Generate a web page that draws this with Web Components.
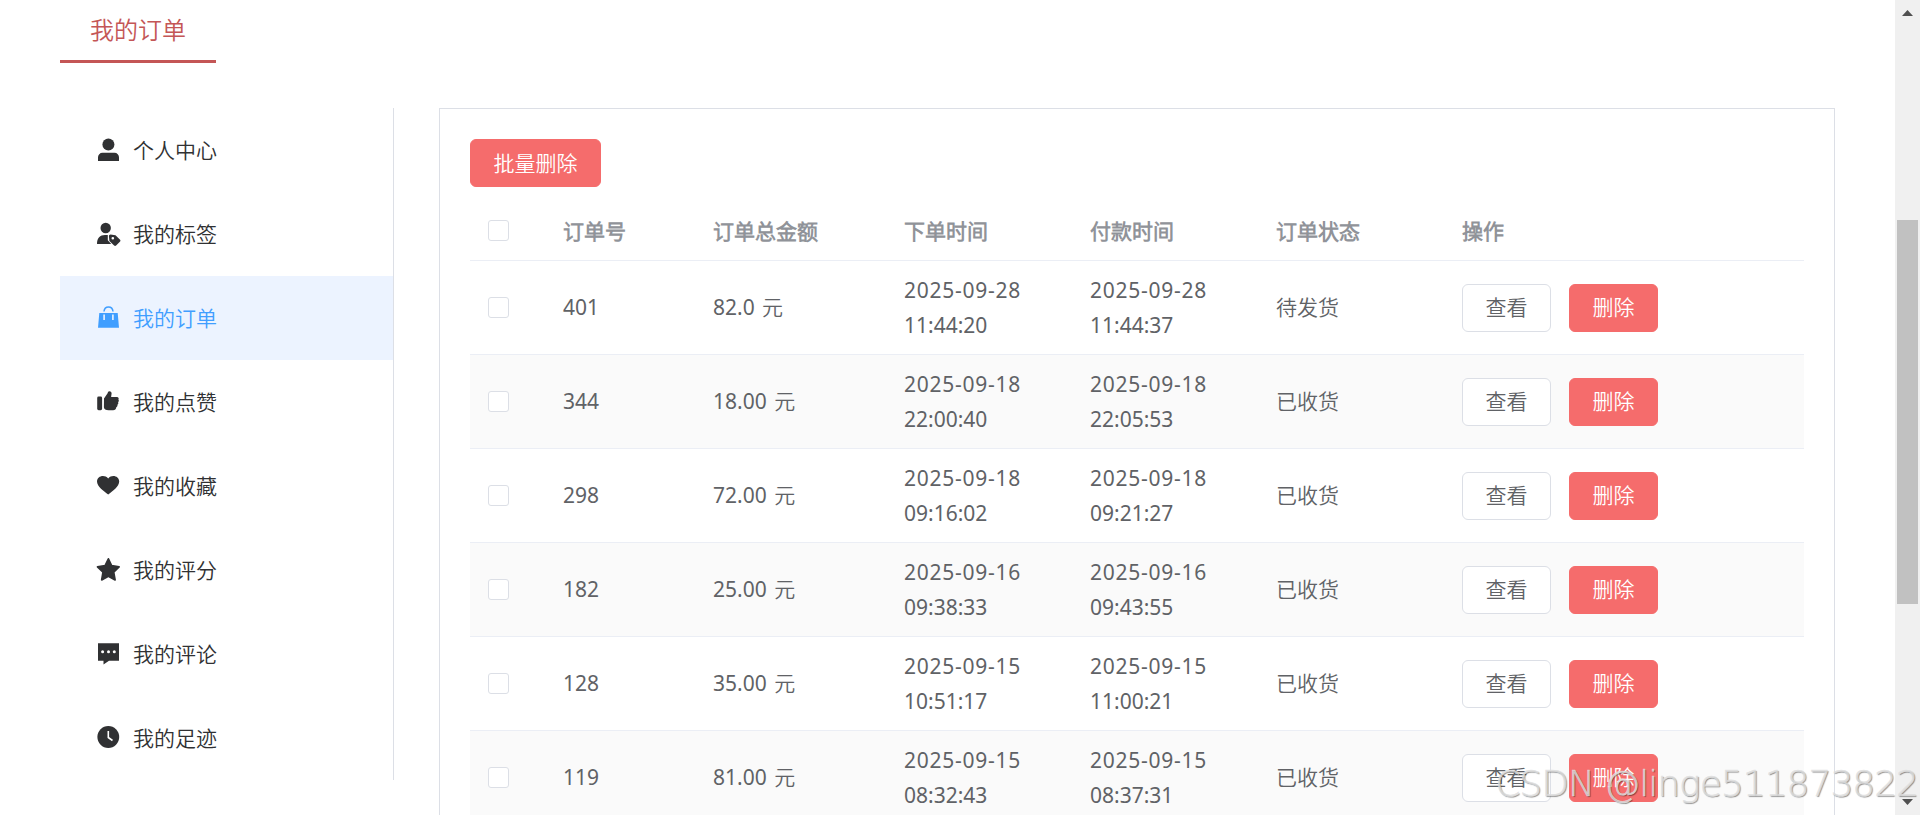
<!DOCTYPE html>
<html lang="zh-CN">
<head>
<meta charset="utf-8">
<title>我的订单</title>
<style>
    html, body {
        margin: 0;
        height: 100%;
        overflow: hidden;
    }

    body {
        background: #fff;
        color: #303133;
        font-family: "Noto Sans", "Noto Sans CJK SC DemiLight", "Noto Sans CJK SC", sans-serif;
        font-size: 21px;
    }
</style>
</head>
<body>
<order-page>
    <page-tab slot="tab">我的订单</page-tab>

    <side-menu slot="menu">
        <menu-item icon="user">个人中心</menu-item>
        <menu-item icon="tag">我的标签</menu-item>
        <menu-item icon="bag" active>我的订单</menu-item>
        <menu-item icon="like">我的点赞</menu-item>
        <menu-item icon="heart">我的收藏</menu-item>
        <menu-item icon="star">我的评分</menu-item>
        <menu-item icon="comment">我的评论</menu-item>
        <menu-item icon="clock">我的足迹</menu-item>
    </side-menu>

    <ui-button type="danger" wide>批量删除</ui-button>
    <order-table></order-table>
</order-page>
<scroll-bar></scroll-bar>
<water-mark>CSDN @linge511873822</water-mark>

<script>
const define = (name, html, setup) => {
    const tpl = document.createElement('template');
    tpl.innerHTML = html;

    customElements.define(name, class extends HTMLElement {
        constructor() {
            super();
            this.attachShadow({ mode: 'open' });
            this.shadowRoot.append(tpl.content.cloneNode(true));
        }

        connectedCallback() {
            if (setup) setup(this, this.shadowRoot);
        }
    });
};

const icons = {
    user: '<circle cx="12.4" cy="6.6" r="6"/><path d="M2 23v-3.5a4.5 4.5 0 0 1 4.5-4.7h12a4.5 4.5 0 0 1 4.5 4.7V23z"/>',
    tag: '<circle cx="9.7" cy="6" r="5.2"/><path d="M1 22c0-6 3-9 8-9h2.8v5.2l3.4 3.8z"/><path fill-rule="evenodd" d="M14.5 12.6l5 .6 4.6 4.6q.8 1 0 1.800l-4 4q-1 .9-2 0l-4.700-4.700-.5-5q0-1.200 1.600-1.300zm2.300 2.400a1.300 1.300 0 1 0 .01 2.600 1.300 1.300 0 0 0 0-2.600z"/>',
    bag: '<path d="M8 5.500C8.500-.5 16.500-.5 17 5.500" fill="none" stroke="currentColor" stroke-width="1.500"/><path fill-rule="evenodd" d="M3.300 7h18.400L23 21.800H2zM7.300 8.500V14h1.600V8.500zm8.800 0V14h1.600V8.500z"/>',
    like: '<rect x="1.200" y="6.600" width="4.900" height="13.600" rx="1.400"/><path d="M8 8.500l3.600-5.300.4-1.300c.6-1.200 3.700-1 3.600 1.700l-.5 3.400h5.800c1.700 0 2.200 1.600 1.500 2.500.7.8.6 2-.3 2.700.5 1 .1 2.100-.7 2.600.300 1.200-.2 2.100-1.100 2.500-.2 1.900-1.300 2.900-3.200 2.900h-4.500c-2.700 0-4.700-1-4.700-3z"/>',
    heart: '<path d="M12.200 20.500C8 17.500 1 12.500 1 7.600 1 2 8.300-.200 12.200 4.400 16-.200 23.200 2 23.200 7.600c0 4.900-6.800 9.900-11 12.900z"/>',
    star: '<path d="M12.400.8l3.200 6.900 7.500 1.100-5.400 5.400 1.400 7.700-6.700-3.600-6.700 3.600L7 14.200 1.500 8.800 9.100 7.700z" stroke="currentColor" stroke-width="1.700" stroke-linejoin="round"/>',
    comment: '<path d="M2 1.200h21v17.500h-10L7.500 22.600v-3.900H2z"/><g fill="#fff"><circle cx="6.600" cy="9.800" r="1.500"/><circle cx="12.500" cy="9.800" r="1.500"/><circle cx="18.300" cy="9.800" r="1.500"/></g>',
    clock: '<circle cx="12.300" cy="11" r="10.900"/><path d="M12.300 5v6.500l4.200 3" fill="none" stroke="#fff" stroke-width="1.600"/>'
};

const orders = [
    ['401', '82.0 元', '2025-09-28 11:44:20', '2025-09-28 11:44:37', '待发货'],
    ['344', '18.00 元', '2025-09-18 22:00:40', '2025-09-18 22:05:53', '已收货'],
    ['298', '72.00 元', '2025-09-18 09:16:02', '2025-09-18 09:21:27', '已收货'],
    ['182', '25.00 元', '2025-09-16 09:38:33', '2025-09-16 09:43:55', '已收货'],
    ['128', '35.00 元', '2025-09-15 10:51:17', '2025-09-15 11:00:21', '已收货'],
    ['119', '81.00 元', '2025-09-15 08:32:43', '2025-09-15 08:37:31', '已收货']
];

define('order-page', `
<style>
    :host {
        display: flex;
        flex-direction: column;
        box-sizing: border-box;
        height: 100vh;
        padding: 0 85px 0 60px;
        overflow: hidden;
    }

    .columns {
        flex: 1;
        min-height: 0;
        display: grid;
        grid-template-columns: 334px 1fr;
        grid-template-rows: 100%;
        column-gap: 45px;
        align-items: start;
        margin-top: 45px;
    }

    .panel {
        height: 100%;
        box-sizing: border-box;
        padding: 30px 30px 0;
        border: 1px solid #dcdfe6;
        border-bottom: 0;
        overflow: hidden;
    }
</style>

<slot name="tab"></slot>
<div class="columns">
    <slot name="menu"></slot>
    <div class="panel"><slot></slot></div>
</div>
`);

define('page-tab', `
<style>
    :host {
        display: block;
        box-sizing: border-box;
        width: 156px;
        height: 63px;
        border-bottom: 3px solid #c45656;
        color: #c45656;
        font-size: 24px;
        font-weight: 350;
        line-height: 60px;
        text-align: center;
    }
</style>
<slot></slot>
`);

define('side-menu', `
<style>
    :host {
        display: block;
        border-right: 1px solid #dcdfe6;
    }
</style>
<slot></slot>
`);

define('menu-item', `
<style>
    :host {
        display: flex;
        align-items: center;
        gap: 13px;
        height: 84px;
        padding-left: 36px;
        font-weight: 350;
    }

    :host([active]) {
        background: #ecf3ff;
        color: #409eff;
    }

    svg {
        width: 24px;
        height: 24px;
        overflow: visible;
        fill: currentColor;
    }

    span {
        padding-bottom: 2px;
    }
</style>
<svg viewBox="0 0 24 24"></svg>
<span><slot></slot></span>
`, (el, root) => {
    root.querySelector('svg').innerHTML = icons[el.getAttribute('icon')];
});

define('ui-button', `
<style>
    :host {
        display: inline-flex;
        align-items: center;
        justify-content: center;
        box-sizing: border-box;
        width: 89px;
        height: 48px;
        border: 1px solid #dcdfe6;
        border-radius: 6px;
        background: #fff;
        color: #606266;
        font-weight: 350;
        line-height: 1;
        vertical-align: top;
    }

    :host([wide]) {
        width: 131px;
    }

    :host([type="danger"]) {
        border-color: #f56c6c;
        background: #f56c6c;
        color: #fff;
    }
</style>
<slot></slot>
`);

define('check-box', `
<style>
    :host {
        display: block;
        box-sizing: border-box;
        width: 21px;
        height: 21px;
        border: 1px solid #dcdfe6;
        border-radius: 3px;
        background: #fff;
    }
</style>
`);

define('order-table', `
<style>
    :host {
        display: block;
        margin-top: 14px;
        color: #606266;
        line-height: 35px;
    }

    .row {
        display: grid;
        grid-template-columns: 78px 150px 191px 186px 186px 186px 1fr;
        align-items: center;
        box-sizing: border-box;
        height: 94px;
        border-bottom: 1px solid #ebeef5;
    }

    .row:nth-child(even of .body) {
        background: #fafafa;
    }

    .row > * {
        margin-left: 15px;
    }

    .row > check-box {
        margin-left: 18px;
    }

    .head {
        height: 60px;
        color: #909399;
        font-weight: bold;
    }

    .head > div {
        padding-top: 2px;
    }

    .total {
        word-spacing: 2px;
    }

    .cjk {
        font-weight: 350;
    }

    .time {
        margin-right: 15px;
    }

    .time::first-line {
        letter-spacing: 0.75px;
    }

    .actions {
        display: flex;
        gap: 18px;
    }
</style>
<div class="row head">
    <check-box></check-box>
    <div>订单号</div>
    <div>订单总金额</div>
    <div>下单时间</div>
    <div>付款时间</div>
    <div>订单状态</div>
    <div>操作</div>
</div>
`, (el, root) => {
    for (const [id, total, created, paid, status] of orders) {
        const row = document.createElement('div');
        row.className = 'row body';
        row.innerHTML = `
            <check-box></check-box>
            <div>${id}</div>
            <div class="total">${total}</div>
            <div class="time">${created}</div>
            <div class="time">${paid}</div>
            <div class="cjk">${status}</div>
            <div class="actions">
                <ui-button>查看</ui-button>
                <ui-button type="danger">删除</ui-button>
            </div>
        `;
        root.append(row);
    }
});

define('scroll-bar', `
<style>
    :host {
        position: absolute;
        top: 0;
        right: 0;
        display: flex;
        flex-direction: column;
        align-items: center;
        box-sizing: border-box;
        width: 25px;
        height: 100%;
        padding: 10px 0;
        background: #f0f0f0;
    }

    svg {
        width: 11px;
        height: 6px;
        fill: #505050;
    }

    .thumb {
        width: 21px;
        height: 384px;
        margin: 204px 0 auto;
        background: #c1c1c1;
    }
</style>
<svg viewBox="0 0 11 6"><path d="M5.500 0L11 6H0z"/></svg>
<div class="thumb"></div>
<svg viewBox="0 0 11 6"><path d="M5.500 6L11 0H0z"/></svg>
`);

define('water-mark', `
<style>
    :host {
        position: absolute;
        right: 2px;
        bottom: 7px;
        color: rgba(222, 222, 222, 0.8);
        font-family: "DejaVu Sans", sans-serif;
        font-size: 36px;
        font-weight: 200;
        letter-spacing: -1px;
        line-height: 48px;
        white-space: nowrap;
        text-shadow: 1px 1px 1px rgba(0, 0, 0, 0.45);
        -webkit-text-stroke: 0.6px rgba(222, 222, 222, 0.8);
    }
</style>
<slot></slot>
`);
</script>
</body>
</html>
